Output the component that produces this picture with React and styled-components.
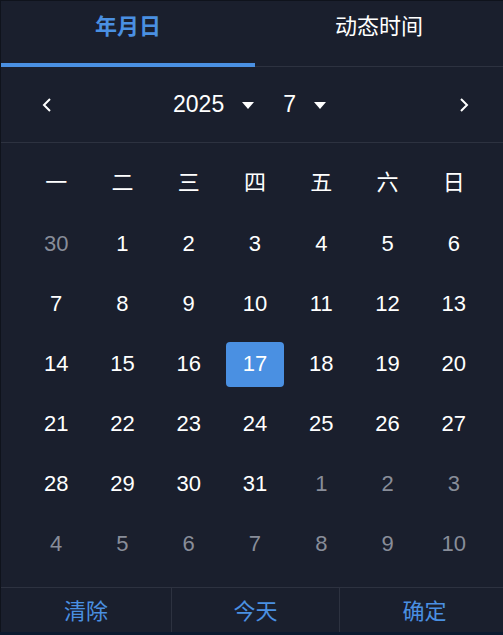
import React from 'react';
import styled, { createGlobalStyle } from 'styled-components';

const blue = '#4a90e2';
const line = '#2d3240';

const GlobalStyle = createGlobalStyle`
  html, body {
    margin: 0;
    padding: 0;
    background: #0c1a2f;
  }
  * { box-sizing: border-box; }
`;

const Panel = styled.div`
  width: 503px;
  height: 632px;
  background: #1a1f2d;
  border-left: 1px solid #0f131c;
  border-top: 1px solid #0f131c;
  display: flex;
  flex-direction: column;
  font-family: "Liberation Sans", "Noto Sans CJK SC", sans-serif;
  color: #ffffff;
`;

const Tabs = styled.div`
  display: flex;
  height: 66px;
  border-bottom: 1px solid ${line};
`;

const Tab = styled.div`
  flex: ${props => (props.active ? '0 0 254px' : '1')};
  display: flex;
  justify-content: center;
  padding-top: 13px;
  font-size: 22px;
  line-height: 26px;
  font-weight: ${props => (props.active ? 700 : 400)};
  color: ${props => (props.active ? blue : '#ffffff')};
  border-bottom: 4px solid ${props => (props.active ? blue : 'transparent')};
  margin-bottom: -1px;
`;

const Header = styled.div`
  height: 76px;
  display: flex;
  align-items: center;
  justify-content: space-between;
  padding: 0 33px 0 40px;
  border-bottom: 1px solid ${line};
`;

const Arrow = styled.svg`
  width: 12px;
  height: 16px;
  flex-shrink: 0;
`;

const Selects = styled.div`
  display: flex;
  align-items: center;
  gap: 29px;
  margin-right: 12px;
`;

const Select = styled.div`
  display: flex;
  align-items: center;
  gap: 18px;
  font-size: 23px;
`;

const Caret = styled.span`
  width: 0;
  height: 0;
  border-left: 6px solid transparent;
  border-right: 6px solid transparent;
  border-top: 7px solid #ffffff;
  margin-top: 1px;
`;

const Grid = styled.div`
  flex: 1;
  display: grid;
  grid-template-columns: repeat(7, 1fr);
  grid-auto-rows: 60px;
  padding: 11px 16px 0 22px;
`;

const Cell = styled.div`
  display: flex;
  align-items: center;
  justify-content: center;
  font-size: 22px;
  padding-bottom: ${props => (props.week ? '9px' : '0')};
  color: ${props => (props.muted ? '#888d99' : '#ffffff')};
`;

const Selected = styled.span`
  width: 58px;
  height: 45px;
  border-radius: 4px;
  background: ${blue};
  display: flex;
  align-items: center;
  justify-content: center;
`;

const Footer = styled.div`
  height: 45px;
  display: grid;
  grid-template-columns: 170px 168px 1fr;
  border-top: 1px solid ${line};
`;

const FooterButton = styled.div`
  display: flex;
  align-items: center;
  justify-content: center;
  font-size: 22px;
  color: ${blue};
  padding-bottom: 3px;
  & + & {
    border-left: 1px solid ${line};
  }
  &:last-child {
    padding-left: 6px;
  }
`;

const weekdays = ['一', '二', '三', '四', '五', '六', '日'];

const days = [
  { d: 30, muted: true },
  ...Array.from({ length: 31 }, (_, i) => ({ d: i + 1 })),
  ...Array.from({ length: 10 }, (_, i) => ({ d: i + 1, muted: true })),
];

export default function App() {
  return (
    <>
      <GlobalStyle />
      <Panel>
        <Tabs>
          <Tab active>年月日</Tab>
          <Tab>动态时间</Tab>
        </Tabs>
        <Header>
          <Arrow viewBox="0 0 12 16">
            <path d="M9 2 L3 8 L9 14" fill="none" stroke="#fff" strokeWidth="2" />
          </Arrow>
          <Selects>
            <Select>2025<Caret /></Select>
            <Select>7<Caret /></Select>
          </Selects>
          <Arrow viewBox="0 0 12 16">
            <path d="M3 2 L9 8 L3 14" fill="none" stroke="#fff" strokeWidth="2" />
          </Arrow>
        </Header>
        <Grid>
          {weekdays.map(w => (
            <Cell key={w} week>{w}</Cell>
          ))}
          {days.map((day, i) => (
            <Cell key={i} muted={day.muted}>
              {!day.muted && day.d === 17 ? <Selected>17</Selected> : day.d}
            </Cell>
          ))}
        </Grid>
        <Footer>
          <FooterButton>清除</FooterButton>
          <FooterButton>今天</FooterButton>
          <FooterButton>确定</FooterButton>
        </Footer>
      </Panel>
    </>
  );
}
